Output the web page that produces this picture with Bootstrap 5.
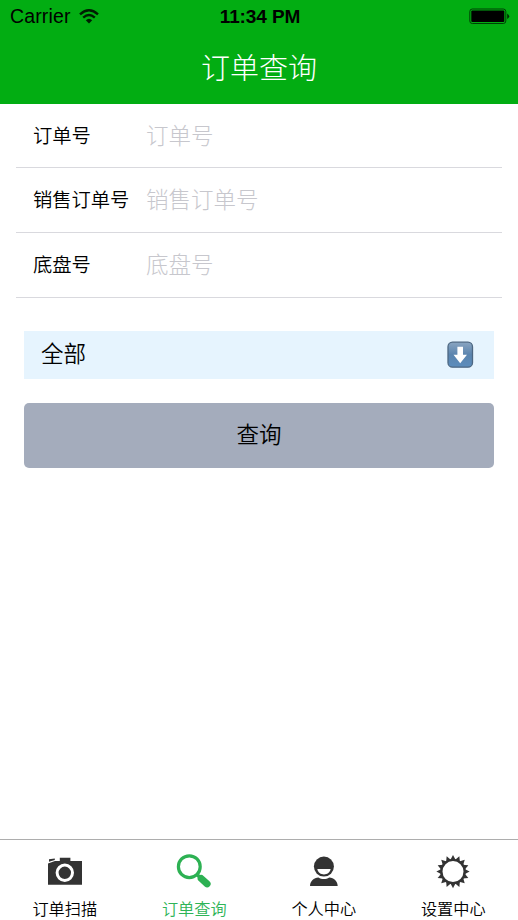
<!DOCTYPE html>
<html lang="zh-CN">
<head>
<meta charset="utf-8">
<meta name="viewport" content="width=device-width, initial-scale=1">
<title>订单查询</title>
<link href="https://cdn.jsdelivr.net/npm/bootstrap@5.3.0/dist/css/bootstrap.min.css" rel="stylesheet">
<style>
body{font-family:"Noto Sans CJK SC",sans-serif;font-weight:350;color:#000;background:#fff}
.screen{height:920px;overflow:hidden}
.top-area{background:#02ad12;height:103.5px}
.status{height:33px;font:400 19.5px/33px "Liberation Sans",Arial,sans-serif;padding:0 8px 0 10px}
.status svg{display:block}
.carrier{letter-spacing:.15px}
.clock{font-weight:700;font-size:19px;letter-spacing:-.1px}
.page-title{font-size:29px;line-height:67px;font-weight:300;color:#fff}
.field-row{height:64.8px;border-bottom:1.5px solid #d9d9de;padding-left:17px}
.field-row:first-child{height:64.5px}
.field-row label{width:113px;font-size:19.3px}
.field-row .form-control{font-size:22.5px;font-weight:300;line-height:34px;height:40px;padding:0 0 3px}
.field-row .form-control::placeholder{color:#c7c7cd;opacity:1}
.filter{margin-top:33px;height:48px;background:#e6f4fe;font-size:22.5px;font-weight:350;padding:0 20px 0 17px;color:#000}
.filter span{padding-bottom:4px}
.query{margin-top:24.5px;height:64.5px;background:#a4acbc;font-size:22.5px;font-weight:350;border-radius:5px;color:#000;padding:0 0 3px}
.tabs{height:81px;border-top:1px solid #adadad}
.tab-link{color:#000;font-size:16.2px;line-height:24px;font-weight:350;padding-top:12px}
.tab-link svg{display:block;margin-bottom:4px}
.tab-link.active{color:#2fb457}
</style>
<script src="https://cdn.jsdelivr.net/npm/bootstrap@5.3.0/dist/js/bootstrap.bundle.min.js"></script>
</head>
<body>
<div class="screen d-flex flex-column">
  <header class="top-area">
    <div class="status d-flex align-items-center">
      <div class="col d-flex align-items-center gap-2">
        <span class="carrier">Carrier</span>
        <svg width="20" height="15" viewBox="0 0 20 15" fill="none" stroke="#001c02" stroke-width="2.4"><path d="M1 5.3Q10-2.7 19 5.3M4.2 8.6Q10 3.6 15.8 8.6"/><path d="M6.8 11.2Q10 8.2 13.2 11.2L10 14.5Z" fill="#001c02" stroke="none"/></svg>
      </div>
      <span class="clock">11:34 PM</span>
      <div class="col d-flex justify-content-end">
        <svg width="41" height="17" viewBox="0 0 41 17"><rect x=".8" y="1" width="36" height="14.5" rx="2.5" fill="none" stroke="#003f05"/><rect x="2.3" y="2.5" width="33" height="11.5" rx="1" fill="#000"/><path d="M38.2 5.5q4 2.8 0 5.6z" fill="#002b03"/></svg>
      </div>
    </div>
    <h1 class="page-title text-center m-0">订单查询</h1>
  </header>
  <main class="flex-grow-1">
    <form class="px-3">
      <div>
        <div class="field-row d-flex align-items-center"><label for="order" class="flex-shrink-0 text-nowrap">订单号</label><input id="order" class="form-control border-0 bg-transparent" placeholder="订单号"></div>
        <div class="field-row d-flex align-items-center"><label for="sales" class="flex-shrink-0 text-nowrap">销售订单号</label><input id="sales" class="form-control border-0 bg-transparent" placeholder="销售订单号"></div>
        <div class="field-row d-flex align-items-center"><label for="chassis" class="flex-shrink-0 text-nowrap">底盘号</label><input id="chassis" class="form-control border-0 bg-transparent" placeholder="底盘号"></div>
      </div>
      <div class="px-2">
        <button type="button" class="filter btn rounded-0 border-0 w-100 d-flex align-items-center justify-content-between">
          <span>全部</span>
          <svg width="27" height="28" viewBox="0 0 27 28"><defs><linearGradient id="blue" x2="0" y2="1"><stop stop-color="#8aa5c1"/><stop offset=".5" stop-color="#5b84ae"/><stop offset="1" stop-color="#5c8dbd"/></linearGradient></defs><rect x="1" y="1.2" width="24.500" height="25" rx="4.500" fill="url(#blue)" stroke="#4d6782" stroke-width="1.300"/><path d="M10.400 5.800h5.600v8h4L13.200 22.200 6.500 13.800h3.900z" fill="#fff"/></svg>
        </button>
        <button type="button" class="query btn border-0 w-100">查询</button>
      </div>
    </form>
  </main>
  <nav class="tabs row g-0 text-center">
    <a class="tab-link col d-flex flex-column align-items-center text-decoration-none" href="#">
      <svg width="40" height="40" viewBox="0 0 40 40"><path d="M3 11.400 10 9h4.800V5.800h10.600V9H37v23.800H3zM4 7.300l5.800-.8V8L4 9.800z" fill="#333"/><circle cx="19.800" cy="20.800" r="7.700" fill="none" stroke="#fff" stroke-width="3"/></svg>
      <span>订单扫描</span>
    </a>
    <a class="tab-link active col d-flex flex-column align-items-center text-decoration-none" href="#" aria-current="page">
      <svg width="40" height="40" viewBox="0 0 40 40" fill="none" stroke="#2db153"><circle cx="15.300" cy="14.700" r="10.900" stroke-width="3.200"/><path d="m22.500 22 5 5" stroke-width="3.500"/><path d="m27.200 26.500 5.900 5.400" stroke-width="7" stroke-linecap="round"/></svg>
      <span>订单查询</span>
    </a>
    <a class="tab-link col d-flex flex-column align-items-center text-decoration-none" href="#">
      <svg width="40" height="40" viewBox="0 0 40 40" fill="#333"><circle cx="19.900" cy="14.600" r="10"/><path d="M13.300 17h13.300c-1 7.200-12.300 7.200-13.300 0z" fill="#fff"/><path d="M6 34c.3-5 3.700-8 8.500-8.400 3 2 7.700 2 10.700 0 4.800.4 8.200 3.400 8.500 8.400z"/></svg>
      <span>个人中心</span>
    </a>
    <a class="tab-link col d-flex flex-column align-items-center text-decoration-none" href="#">
      <svg width="40" height="40" viewBox="-20 -20 40 40" fill="#333"><defs><path id="tooth" d="M-2.700-11.500 0-16.600 2.700-11.500z"/><g id="teeth"><use href="#tooth"/><use href="#tooth" transform="rotate(22.5)"/><use href="#tooth" transform="rotate(45)"/><use href="#tooth" transform="rotate(67.5)"/></g></defs><g transform="translate(0 -.4)"><circle r="11.600" fill="none" stroke="#333" stroke-width="2.200"/><use href="#teeth"/><use href="#teeth" transform="rotate(90)"/><use href="#teeth" transform="rotate(180)"/><use href="#teeth" transform="rotate(270)"/></g></svg>
      <span>设置中心</span>
    </a>
  </nav>
</div>
</body>
</html>
